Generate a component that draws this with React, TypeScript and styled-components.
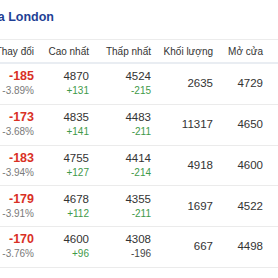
import React from "react";
import styled, { createGlobalStyle } from "styled-components";

const Global = createGlobalStyle`
  html, body { margin: 0; padding: 0; background: #fff; }
  body { font-family: "Liberation Sans", Arial, "Noto Sans", sans-serif; }
`;

const Page = styled.div`
  width: 278px;
  height: 278px;
  overflow: hidden;
  background: #fff;
`;

const TitleBar = styled.div`
  height: 39px;
  display: flex;
  align-items: center;
  padding-bottom: 5px;
  box-sizing: border-box;
`;

const TitleClip = styled.div`
  width: 54px;
  overflow: hidden;
  display: flex;
  justify-content: flex-end;
`;

const Title = styled.h2`
  margin: 0;
  white-space: nowrap;
  font-size: 12.5px;
  font-weight: 700;
  color: #1f3f95;
`;

const Table = styled.div`
  margin-left: -26px;
  width: 304px;
`;

const cols = "60px 55px 62px 62px 50px 15px";

const HeadRow = styled.div`
  display: grid;
  grid-template-columns: ${cols};
  height: 22px;
  align-items: center;
  border-top: 1px solid #ececec;
  border-bottom: 2px solid #e9edf2;
`;

const HeadCell = styled.div`
  text-align: right;
  white-space: nowrap;
  font-size: 10px;
  color: #333;
`;

const Row = styled.div`
  display: grid;
  grid-template-columns: ${cols};
  height: 39.75px;
  align-items: center;
  border-bottom: 1px solid #ebebeb;
`;

const Cell = styled.div`
  text-align: right;
  white-space: nowrap;
  display: flex;
  flex-direction: column;
  align-items: flex-end;
`;

const Main = styled.span<{ $red?: boolean }>`
  font-size: ${(p) => (p.$red ? "12.5px" : "11.5px")};
  line-height: 15px;
  font-weight: ${(p) => (p.$red ? 700 : 400)};
  color: ${(p) => (p.$red ? "#d93025" : "#333")};
`;

const Sub = styled.span<{ $tone: "gray" | "green" | "dark" }>`
  font-size: 10px;
  line-height: 14px;
  color: ${(p) =>
    p.$tone === "green" ? "#3f9a4a" : p.$tone === "gray" ? "#7a7a7a" : "#444"};
`;

type R = {
  chg: string;
  pct: string;
  hi: string;
  hiD: string;
  lo: string;
  loD: string;
  loTone?: "green" | "dark";
  vol: string;
  open: string;
};

const rows: R[] = [
  { chg: "-185", pct: "-3.89%", hi: "4870", hiD: "+131", lo: "4524", loD: "-215", vol: "2635", open: "4729" },
  { chg: "-173", pct: "-3.68%", hi: "4835", hiD: "+141", lo: "4483", loD: "-211", vol: "11317", open: "4650" },
  { chg: "-183", pct: "-3.94%", hi: "4755", hiD: "+127", lo: "4414", loD: "-214", vol: "4918", open: "4600" },
  { chg: "-179", pct: "-3.91%", hi: "4678", hiD: "+112", lo: "4355", loD: "-211", vol: "1697", open: "4522" },
  { chg: "-170", pct: "-3.76%", hi: "4600", hiD: "+96", lo: "4308", loD: "-196", loTone: "dark", vol: "667", open: "4498" },
];

export default function App() {
  return (
    <Page>
      <Global />
      <TitleBar>
        <TitleClip>
          <Title>Robusta London</Title>
        </TitleClip>
      </TitleBar>
      <Table>
        <HeadRow>
          <HeadCell>Thay đổi</HeadCell>
          <HeadCell>Cao nhất</HeadCell>
          <HeadCell>Thấp nhất</HeadCell>
          <HeadCell>Khối lượng</HeadCell>
          <HeadCell>Mở cửa</HeadCell>
          <div />
        </HeadRow>
        {rows.map((r) => (
          <Row key={r.chg + r.hi}>
            <Cell>
              <Main $red>{r.chg}</Main>
              <Sub $tone="gray">{r.pct}</Sub>
            </Cell>
            <Cell>
              <Main>{r.hi}</Main>
              <Sub $tone="green">{r.hiD}</Sub>
            </Cell>
            <Cell>
              <Main>{r.lo}</Main>
              <Sub $tone={r.loTone ?? "green"}>{r.loD}</Sub>
            </Cell>
            <Cell>
              <Main>{r.vol}</Main>
            </Cell>
            <Cell>
              <Main>{r.open}</Main>
            </Cell>
            <div />
          </Row>
        ))}
      </Table>
    </Page>
  );
}
